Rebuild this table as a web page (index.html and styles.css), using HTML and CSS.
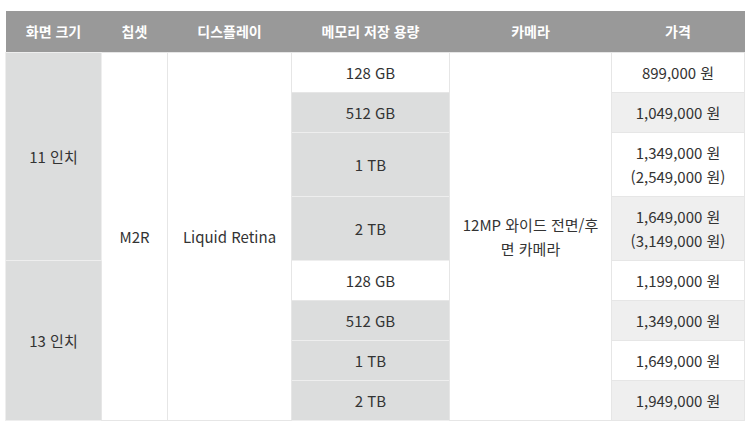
FILE: index.html
```html
<!DOCTYPE html>
<html lang="ko">
<head>
<meta charset="utf-8">
<link rel="stylesheet" href="styles.css">
</head>
<body>
<div class="wrap">
<table class="spec">
  <colgroup>
    <col class="c1"><col class="c2"><col class="c3"><col class="c4"><col class="c5"><col class="c6">
  </colgroup>
  <thead>
    <tr><th>화면 크기</th><th>칩셋</th><th>디스플레이</th><th>메모리 저장 용량</th><th>카메라</th><th>가격</th></tr>
  </thead>
  <tbody>
    <tr>
      <td rowspan="4" class="grey">11 인치</td>
      <td rowspan="8">M2R</td>
      <td rowspan="8">Liquid Retina</td>
      <td>128 GB</td>
      <td rowspan="8">12MP 와이드 전면/후면 카메라</td>
      <td>899,000 원</td>
    </tr>
    <tr><td class="grey">512 GB</td><td class="light">1,049,000 원</td></tr>
    <tr><td class="grey">1 TB</td><td>1,349,000 원<br>(2,549,000 원)</td></tr>
    <tr><td class="grey">2 TB</td><td class="light">1,649,000 원<br>(3,149,000 원)</td></tr>
    <tr><td rowspan="4" class="grey">13 인치</td><td>128 GB</td><td>1,199,000 원</td></tr>
    <tr><td class="grey">512 GB</td><td class="light">1,349,000 원</td></tr>
    <tr><td class="grey">1 TB</td><td>1,649,000 원</td></tr>
    <tr><td class="grey">2 TB</td><td class="light">1,949,000 원</td></tr>
  </tbody>
</table>
</div>
</body>
</html>
```

FILE: styles.css
```css
html, body {
  margin: 0;
  padding: 0;
  background: #ffffff;
}
.wrap {
  padding: 11px 0 0 5px;
}
.spec {
  width: 739px;
  border-collapse: collapse;
  table-layout: fixed;
  font-family: "Noto Sans CJK KR", "Noto Sans", sans-serif;
  font-size: 15px;
  color: #333333;
}
.c1 { width: 96px; }
.c2 { width: 66px; }
.c3 { width: 124px; }
.c4 { width: 158px; }
.c5 { width: 162px; }
.c6 { width: 133px; }
.spec th {
  background: #999999;
  color: #ffffff;
  font-size: 14px;
  font-weight: 700;
  line-height: 24px;
  padding: 8px 6px 9px;
  text-align: center;
  border: none;
}
.spec td {
  border: 1px solid #e6e6e6;
  line-height: 24px;
  padding: 8px 10px 7px;
  text-align: center;
  vertical-align: middle;
  background: #ffffff;
}
.spec td.grey {
  background: #dcdddd;
  border-color: #eeeeee;
}
.spec td.light {
  background: #efefef;
}
```
